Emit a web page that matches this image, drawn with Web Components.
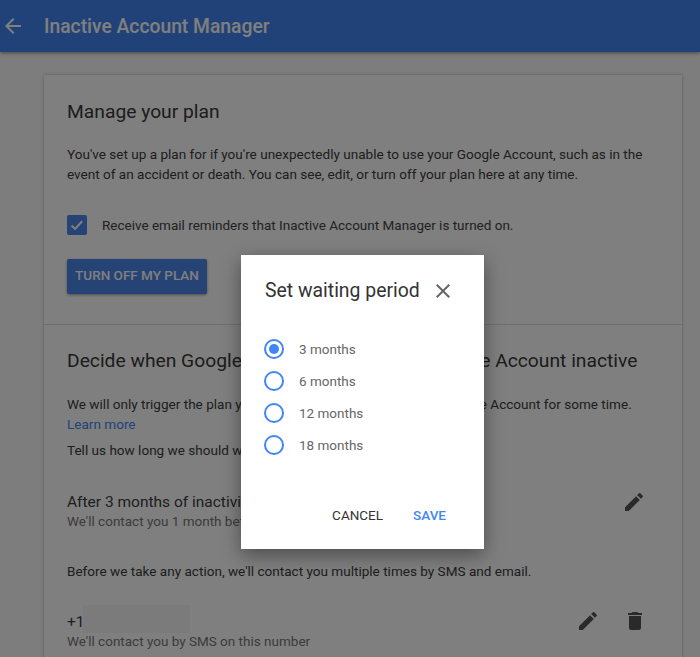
<!DOCTYPE html>
<html lang="en"><head><meta charset="utf-8"><title>Inactive Account Manager</title>
<style>
html,body{margin:0;height:657px;overflow:hidden;background:#fbfbfb;font-family:Roboto,"Liberation Sans",sans-serif;}
</style></head><body>
<iam-app>
  <iam-bar slot="bar">Inactive Account Manager</iam-bar>
  <iam-card>
    <iam-section style="height:249px;--pt:25px">
      <iam-h>Manage your plan</iam-h>
      <iam-p style="margin-top:21px">You've set up a plan for if you're unexpectedly unable to use your Google Account, such as in the event of an accident or death. You can see, edit, or turn off your plan here at any time.</iam-p>
      <iam-check style="margin-top:31px">Receive email reminders that Inactive Account Manager is turned on.</iam-check>
      <iam-btn style="margin-top:24px">TURN OFF MY PLAN</iam-btn>
    </iam-section>
    <iam-section style="--pt:24px;--bt:1px">
      <iam-h>Decide when Google should consider your Google Account inactive</iam-h>
      <iam-p style="margin-top:22px">We will only trigger the plan you set up if you haven't used your Google Account for some time. <iam-link>Learn more</iam-link></iam-p>
      <iam-p style="margin-top:7px">Tell us how long we should wait before taking action.</iam-p>
      <iam-row style="margin-top:30px" sub="We'll contact you 1 month before the waiting period ends">After 3 months of inactivity<iam-icon slot="a" name="edit" style="margin-right:1px"></iam-icon></iam-row>
      <iam-p style="margin-top:32px">Before we take any action, we'll contact you multiple times by SMS and email.</iam-p>
      <iam-row style="margin-top:30px" sub="We'll contact you by SMS on this number" redacted>+1<iam-icon slot="a" name="edit" style="margin:-1px 23px 0 0"></iam-icon><iam-icon slot="a" name="trash" style="margin-top:-1px"></iam-icon></iam-row>
    </iam-section>
  </iam-card>
  <iam-dialog slot="overlay" heading="Set waiting period">
    <iam-radio checked>3 months</iam-radio>
    <iam-radio>6 months</iam-radio>
    <iam-radio>12 months</iam-radio>
    <iam-radio>18 months</iam-radio>
  </iam-dialog>
</iam-app>
<script>
const def=(n,css,html,extra)=>{customElements.define(n,class extends HTMLElement{constructor(){super();this.attachShadow({mode:'open'}).innerHTML=`<style>${css}</style>${html}`;}connectedCallback(){extra&&extra.call(this);}});};
const ICONS={
 edit:'<path d="M3 17.25V21h3.75L17.81 9.94l-3.75-3.75L3 17.25zM20.71 7.04a1 1 0 0 0 0-1.41l-2.34-2.34a1 1 0 0 0-1.41 0l-1.83 1.83 3.75 3.75 1.83-1.83z"/>',
 trash:'<path d="M6 19c0 1.1.9 2 2 2h8c1.1 0 2-.9 2-2V7H6v12zM19 4h-3.5l-1-1h-5l-1 1H5v2h14V4z"/>'
};
def('iam-app',`:host{display:block;position:relative;width:700px;height:657px;overflow:hidden;}
 main{padding:23px 18px 0 44px;}
 .scrim{position:absolute;inset:0;background:rgba(0,0,0,.5);display:flex;align-items:flex-start;justify-content:flex-start;}`,
 `<slot name="bar"></slot><main><slot></slot></main><div class="scrim"><slot name="overlay"></slot></div>`);
def('iam-bar',`:host{display:flex;align-items:center;box-sizing:border-box;height:52px;padding-top:1px;background:#4285f0;color:#fff;box-shadow:0 1px 4px rgba(0,0,0,.45);font:500 19.3px/24px Roboto,sans-serif;position:relative;}
 svg{width:24px;height:24px;margin:-1px 19px 0 1px;fill:#fff;flex:none}`,
 `<svg viewBox="0 0 24 24"><path d="M20 11H7.83l5.59-5.59L12 4l-8 8 8 8 1.41-1.41L7.83 13H20v-2z"/></svg><slot></slot>`);
def('iam-card',`:host{display:block;background:#fff;box-shadow:0 0 3px rgba(0,0,0,.3);height:640px;}`,`<slot></slot>`);
def('iam-section',`:host{display:block;box-sizing:border-box;padding:var(--pt,24px) 23px 0;border-top:var(--bt,0) solid #dcdcdc;}`,`<slot></slot>`);
def('iam-h',`:host{display:block;font:400 19.25px/24px Roboto,sans-serif;color:#383838;}`,`<slot></slot>`);
def('iam-p',`:host{display:block;font:400 13.55px/19.5px Roboto,sans-serif;color:#3c3c3c;}`,`<slot></slot>`);
def('iam-link',`:host{display:block;color:#4285f4;}`,`<slot></slot>`);
def('iam-check',`:host{display:flex;align-items:center;gap:15px;font:400 13.5px/20px Roboto,sans-serif;color:#444;}
 i{width:20px;height:20px;border-radius:2px;background:#4a86ea;display:block;flex:none}
 svg{display:block;width:20px;height:20px;fill:none;stroke:#fff;stroke-width:2}`,
 `<i><svg viewBox="0 0 20 20"><path d="M4.5 10.5l3.6 3.4 7-7.6"/></svg></i><slot></slot>`);
def('iam-btn',`:host{display:flex;align-items:center;justify-content:center;box-sizing:border-box;width:140px;height:35px;border-radius:2px;background:#4a86ea;color:#fff;font:500 13.5px/20px Roboto,sans-serif;box-shadow:0 1px 3px rgba(0,0,0,.4);padding-bottom:3px;}`,`<slot></slot>`);
def('iam-icon',`:host{display:block;width:24px;height:24px;fill:#555;}svg{display:block;width:24px;height:24px}`,`<svg viewBox="0 0 24 24"></svg>`,function(){this.shadowRoot.querySelector('svg').innerHTML=ICONS[this.getAttribute('name')];});
def('iam-row',`:host{display:flex;align-items:flex-start;justify-content:space-between;font:400 15.5px/22px Roboto,sans-serif;color:#3c3c3c;}
 .t{position:relative}
 small{display:block;font:400 13.5px/17px Roboto,sans-serif;color:#777;}
 .r{display:none;position:absolute;left:16px;top:-6px;width:107px;height:28px;background:#f7f7f7}
 :host([redacted]) .r{display:block}
 .a{display:flex;margin:-1px 12px 0 0}`,
 `<div class="t"><slot></slot><small></small><span class="r"></span></div><div class="a"><slot name="a"></slot></div>`,
 function(){this.shadowRoot.querySelector('small').textContent=this.getAttribute('sub');});
def('iam-dialog',`:host{display:flex;flex-direction:column;box-sizing:border-box;width:243px;height:294px;margin:255px 0 0 241px;background:#fff;box-shadow:0 6px 18px rgba(0,0,0,.4);padding:24px 24px 0 24px;}
 header{display:flex;justify-content:space-between;align-items:center;font:400 19.4px/24px Roboto,sans-serif;color:#333;}
 svg{width:24px;height:24px;fill:#666;display:block;margin-right:5px}
 .l{display:flex;flex-direction:column;margin:30px 0 0 -1px;}
 footer{display:flex;justify-content:flex-end;gap:30px;margin-top:auto;margin-bottom:25px;font:500 13.5px/18px Roboto,sans-serif;color:#333;padding-right:14px}
 footer b{font-weight:500;color:#4285f4}
 footer span{font-weight:400}`,
 `<header><span class="h"></span><svg viewBox="0 0 24 24"><path d="M19 6.41 17.59 5 12 10.59 6.41 5 5 6.41 10.59 12 5 17.59 6.41 19 12 13.41 17.59 19 19 17.59 13.41 12z"/></svg></header><div class="l"><slot></slot></div><footer><span>CANCEL</span><b>SAVE</b></footer>`,
 function(){this.shadowRoot.querySelector('.h').textContent=this.getAttribute('heading');});
def('iam-radio',`:host{display:flex;align-items:center;height:32px;gap:15px;font:400 13.5px/20px Roboto,sans-serif;color:#666;}
 i{display:block;box-sizing:border-box;width:20px;height:20px;border:2px solid #4285f4;border-radius:50%;position:relative;flex:none}
 :host([checked]) i::after{content:"";position:absolute;inset:3px;border-radius:50%;background:#4285f4}`,
 `<i></i><slot></slot>`);
</script>
</body></html>
